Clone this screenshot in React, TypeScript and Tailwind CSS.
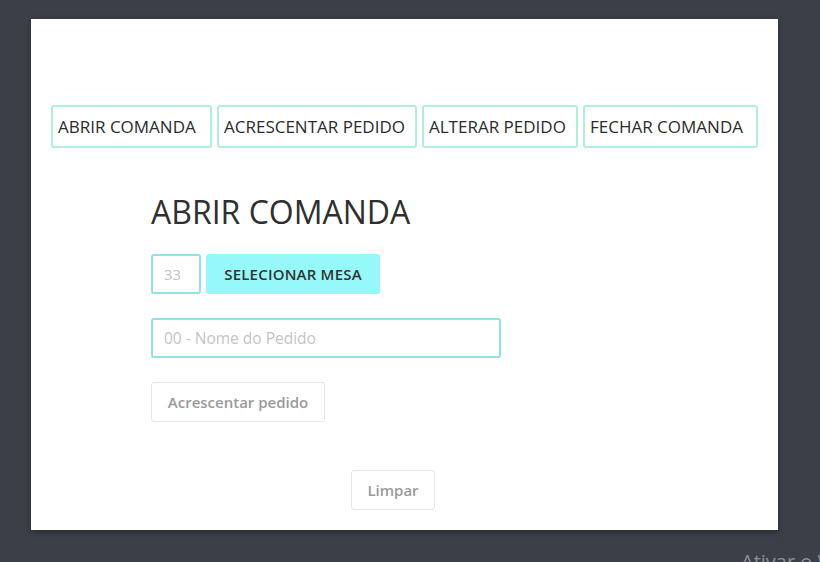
const NAV = [
  { label: "ABRIR COMANDA", w: "w-[161px]" },
  { label: "ACRESCENTAR PEDIDO", w: "w-[200px]" },
  { label: "ALTERAR PEDIDO", w: "w-[156px]" },
  { label: "FECHAR COMANDA", w: "w-[175px]" },
];

export default function App() {
  return (
    <div
      className="relative h-[562px] w-[820px] overflow-hidden bg-[#3b3f48] pl-[31px] pt-[19px]"
      style={{ fontFamily: '"Open Sans", "Noto Sans", sans-serif' }}
    >
      <div className="flex h-[511px] w-[747px] flex-col bg-white shadow-[0_2px_6px_rgba(0,0,0,0.35)]">
        {/* top menu */}
        <nav className="ml-[20px] mt-[86px] flex gap-[5px]">
          {NAV.map(({ label, w }) => (
            <button
              key={label}
              className={`h-[43px] ${w} whitespace-nowrap rounded-[3px] border-2 border-[#aef0da] bg-white pl-[5px] text-left text-[17px] text-[#2b2b2b]`}
            >
              {label}
            </button>
          ))}
        </nav>

        <div className="ml-[120px] mt-[44px] flex flex-col">
          <h1 className="text-[32px] leading-[40px] text-[#2f2f2f]">ABRIR COMANDA</h1>

          <div className="mt-[22px] flex gap-[5px]">
            <input
              placeholder="33"
              className="h-[40px] w-[50px] rounded-[3px] border-2 border-[#8fe3e3] px-[11px] text-[15px] outline-none placeholder:text-[#c4c4c4]"
            />
            <button className="h-[40px] w-[174px] rounded-[3px] bg-[#96f8f8] text-[15px] font-semibold tracking-[0.2px] text-[#333]">
              SELECIONAR MESA
            </button>
          </div>

          <input
            placeholder="00 - Nome do Pedido"
            className="mt-[24px] h-[40px] w-[350px] rounded-[3px] border-2 border-[#8fe3e3] px-[11px] text-[15.5px] outline-none placeholder:text-[#c4c4c4]"
          />

          <button className="mt-[24px] h-[40px] w-[174px] rounded-[3px] border border-[#e6e6e6] bg-white text-[15px] font-semibold text-[#9a9a9a]">
            Acrescentar pedido
          </button>

          <button className="ml-[200px] mt-[48px] h-[40px] w-[84px] rounded-[3px] border border-[#e6e6e6] bg-white text-[15px] font-semibold text-[#9a9a9a]">
            Limpar
          </button>
        </div>
      </div>

      <div className="absolute left-[741px] top-[547px] whitespace-nowrap text-[20px] text-[#8b8e94]">
        Ativar o Windows
      </div>
    </div>
  );
}
